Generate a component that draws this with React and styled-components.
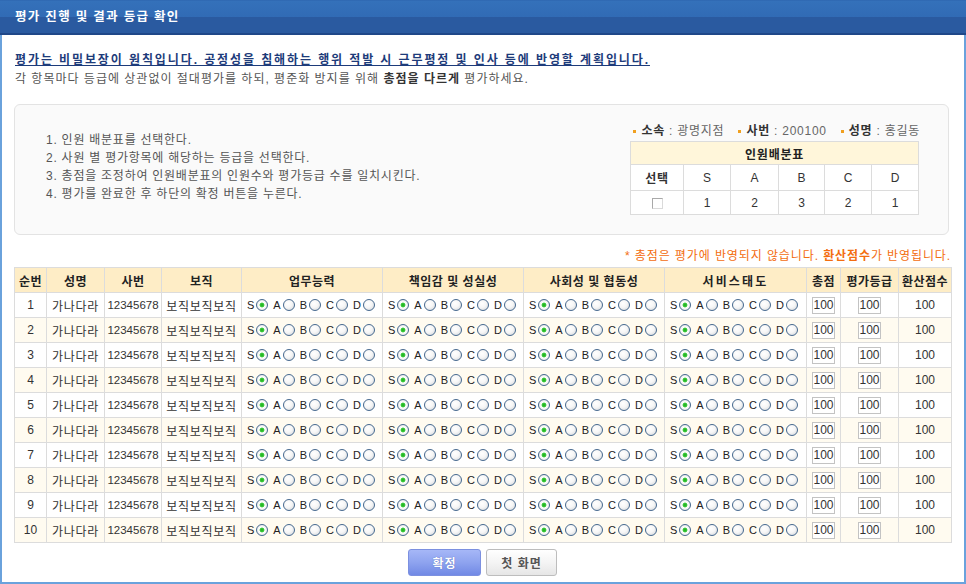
import React from "react";
import styled, { createGlobalStyle, css } from "styled-components";

const FONT = `"Liberation Sans", "Noto Sans CJK KR", sans-serif`;

const GlobalStyle = createGlobalStyle`
  html, body { margin: 0; padding: 0; background: #fff; }
  body { font-family: ${FONT}; font-size: 12px; color: #333; letter-spacing: 0.75px; }
  * { box-sizing: border-box; }
`;

const Frame = styled.div`
  width: 966px;
  height: 584px;
  display: flex;
  flex-direction: column;
  background: #fff;
`;

const TitleBar = styled.div`
  flex: none;
  height: 35px;
  padding-left: 15px;
  background: linear-gradient(
    to bottom,
    #2c63ad 0,
    #3471ba 1px,
    #316bb5 17px,
    #2a5aa0 17px,
    #2a5aa0 33px,
    #1f4788 33px
  );
  color: #fff;
  font-size: 12.5px;
  font-weight: bold;
  letter-spacing: 1.3px;
  line-height: 34px;
`;

const Body = styled.div`
  flex: 1;
  border: 2px solid #6aa2dc;
  border-top: none;
  padding: 16px 13px 0 12px;
  display: flex;
  flex-direction: column;
`;

const Lead = styled.p`
  margin: 0 0 0 1px;
  line-height: 18px;
  font-size: 12px;
  font-weight: bold;
  color: #1d3b7a;
  text-decoration: underline;
  letter-spacing: 1.9px;
`;

const Sub = styled.p`
  margin: 1px 0 0 1px;
  line-height: 18px;
  color: #555;
  letter-spacing: 1px;
  strong { color: #333; }
`;

const InfoBox = styled.div`
  margin: 16px 2px 0 0;
  height: 131px;
  border: 1px solid #e3e3e3;
  border-radius: 6px;
  background: #fafafa;
  display: flex;
  align-items: flex-start;
  justify-content: space-between;
  padding: 0 30px 0 31px;
`;

const Steps = styled.ol`
  margin: 26px 0 0;
  padding: 0;
  list-style: none;
  color: #555;
  line-height: 18px;
`;

const Side = styled.div`
  margin-top: 19px;
  width: 288px;
`;

const Staff = styled.div`
  display: flex;
  justify-content: flex-end;
  gap: 14px;
  line-height: 14px;
  margin: 0 -2px 3px 0;
  color: #666;
  white-space: nowrap;
`;

const StaffItem = styled.span`
  display: inline-flex;
  align-items: center;
  white-space: pre;
  b { color: #333; }
`;

const Bullet = styled.i`
  display: inline-block;
  width: 3px;
  height: 3px;
  background: #f0a020;
  margin-right: 5px;
`;

const DistTable = styled.table`
  width: 288px;
  border-collapse: collapse;
  table-layout: fixed;
  background: #fff;
  letter-spacing: 0;
`;

const DistHead = styled.th`
  height: 23px;
  padding: 0;
  border: 1px solid #dcdcdc;
  background: #fff6da;
  color: #222;
  font-weight: bold;
  letter-spacing: 0.75px;
`;

const DistCell = styled.td`
  height: ${(p) => p.$h}px;
  padding: 0;
  border: 1px solid #dcdcdc;
  text-align: center;
  color: #333;
  font-weight: ${(p) => (p.$bold ? "bold" : "normal")};
  letter-spacing: ${(p) => (p.$bold ? "0.75px" : "0")};
`;

const Check = styled.input.attrs({ type: "checkbox" })`
  appearance: none;
  -webkit-appearance: none;
  margin: 0;
  width: 11px;
  height: 11px;
  border: 1px solid #a9a9a9;
  border-right-color: #dadada;
  border-bottom-color: #dadada;
  background: #fff;
  vertical-align: middle;
`;

const Note = styled.p`
  margin: 13px 0 3px;
  text-align: right;
  color: #f36d10;
  line-height: 16px;
  letter-spacing: 0.9px;
  b { font-weight: bold; }
`;

const Grid = styled.table`
  width: 937px;
  border-collapse: collapse;
  table-layout: fixed;
`;

const Th = styled.th`
  height: 25px;
  padding: 0;
  background: #feedc6;
  border: 1px solid #dcdcdc;
  color: #222;
  font-weight: bold;
  white-space: nowrap;
  letter-spacing: ${(p) => (p.$wide ? "2.2px" : "0.5px")};
`;

const Tr = styled.tr`
  background: ${(p) => (p.$alt ? "#fffbf0" : "#fff")};
`;

const Td = styled.td`
  height: 25px;
  padding: 0;
  border: 1px solid #dcdcdc;
  text-align: center;
  color: #333;
  white-space: nowrap;
  overflow: hidden;
`;

const NumTd = styled(Td)`
  letter-spacing: 0;
  font-size: ${(p) => (p.$small ? "11.5px" : "12px")};
`;

const GradeTd = styled(Td)`
  text-align: left;
  padding-left: 5px;
`;

const Options = styled.div`
  display: flex;
  align-items: center;
`;

const Opt = styled.label`
  display: inline-flex;
  align-items: center;
  margin-right: 5px;
  font-size: 11px;
  letter-spacing: 0;
  color: #222;
  &:last-child { margin-right: 0; }
`;

const Radio = styled.input.attrs({ type: "radio" })`
  appearance: none;
  -webkit-appearance: none;
  margin: 0 0 0 2px;
  width: 12px;
  height: 12px;
  border-radius: 50%;
  border: 1px solid #46698f;
  background: radial-gradient(circle at 40% 35%, #ffffff 0, #f6f6f6 45%, #cdd1d6 100%);
  &:checked {
    background: radial-gradient(circle at 50% 50%, #1faa1f 0, #3acb3a 2px, #ffffff 2.8px, #f3f3f3 60%, #cdd1d6 100%);
  }
`;

const ScoreInput = styled.input`
  width: 23px;
  height: 17px;
  border: 1px solid #c3c3c3;
  padding: 0;
  font: 12px ${FONT};
  letter-spacing: 0;
  color: #333;
  text-align: center;
  vertical-align: middle;
  background: #fff;
`;

const Actions = styled.div`
  display: flex;
  justify-content: center;
  gap: 5px;
  margin-top: 6px;
`;

const Btn = styled.button`
  width: ${(p) => p.$w}px;
  height: 27px;
  border-radius: 3px;
  font: bold 12px ${FONT};
  letter-spacing: 1px;
  padding: 0;
  cursor: pointer;
  ${(p) =>
    p.$primary
      ? css`
          border: 1px solid #7c90e0;
          background: linear-gradient(to bottom, #a6b7f7 0%, #8ea3ef 50%, #7189e5 100%);
          color: #fff;
          text-shadow: 0 0 1px rgba(40, 60, 140, 0.6);
        `
      : css`
          border: 1px solid #bdbdbd;
          background: linear-gradient(to bottom, #ffffff 0%, #f4f4f4 50%, #e6e6e6 100%);
          color: #555;
        `}
`;

const COLS = [32, 58, 57, 80, 141, 141, 141, 142, 34, 58, 53];
const CATEGORIES = ["업무능력", "책임감 및 성실성", "사회성 및 협동성", "서비스태도"];
const GRADES = ["S", "A", "B", "C", "D"];
const DIST = [1, 2, 3, 2, 1];
const DIST_W = [53, 47, 48, 46, 47, 47];

const rows = Array.from({ length: 10 }, (_, i) => ({
  no: i + 1,
  name: "가나다라",
  id: "12345678",
  pos: "보직보직보직",
}));

function GradeOptions({ name }) {
  return (
    <Options>
      {GRADES.map((g, i) => (
        <Opt key={g}>
          {g}
          <Radio name={name} defaultChecked={i === 0} />
        </Opt>
      ))}
    </Options>
  );
}

export default function App() {
  return (
    <>
      <GlobalStyle />
      <Frame>
        <TitleBar>평가 진행 및 결과 등급 확인</TitleBar>
        <Body>
          <Lead>
            평가는 비밀보장이 원칙입니다. 공정성을 침해하는 행위 적발 시 근무평정 및 인사 등에 반영할 계획입니다.
          </Lead>
          <Sub>
            각 항목마다 등급에 상관없이 절대평가를 하되, 평준화 방지를 위해 <strong>총점을 다르게</strong> 평가하세요.
          </Sub>

          <InfoBox>
            <Steps>
              <li>1. 인원 배분표를 선택한다.</li>
              <li>2. 사원 별 평가항목에 해당하는 등급을 선택한다.</li>
              <li>3. 총점을 조정하여 인원배분표의 인원수와 평가등급 수를 일치시킨다.</li>
              <li>4. 평가를 완료한 후 하단의 확정 버튼을 누른다.</li>
            </Steps>
            <Side>
              <Staff>
                <StaffItem>
                  <Bullet />
                  <b>소속</b> : 광명지점
                </StaffItem>
                <StaffItem>
                  <Bullet />
                  <b>사번</b> : 200100
                </StaffItem>
                <StaffItem>
                  <Bullet />
                  <b>성명</b> : 홍길동
                </StaffItem>
              </Staff>
              <DistTable>
                <colgroup>
                  {DIST_W.map((w, i) => (
                    <col key={i} style={{ width: w }} />
                  ))}
                </colgroup>
                <tbody>
                  <tr>
                    <DistHead colSpan={6}>인원배분표</DistHead>
                  </tr>
                  <tr>
                    <DistCell $h={26} $bold>
                      선택
                    </DistCell>
                    {GRADES.map((g) => (
                      <DistCell key={g} $h={26}>
                        {g}
                      </DistCell>
                    ))}
                  </tr>
                  <tr>
                    <DistCell $h={24}>
                      <Check />
                    </DistCell>
                    {DIST.map((n, i) => (
                      <DistCell key={i} $h={24}>
                        {n}
                      </DistCell>
                    ))}
                  </tr>
                </tbody>
              </DistTable>
            </Side>
          </InfoBox>

          <Note>
            * 총점은 평가에 반영되지 않습니다. <b>환산점수</b>가 반영됩니다.
          </Note>

          <Grid>
            <colgroup>
              {COLS.map((w, i) => (
                <col key={i} style={{ width: w }} />
              ))}
            </colgroup>
            <thead>
              <tr>
                <Th>순번</Th>
                <Th>성명</Th>
                <Th>사번</Th>
                <Th>보직</Th>
                {CATEGORIES.map((c) => (
                  <Th key={c} $wide={c === "서비스태도"}>
                    {c}
                  </Th>
                ))}
                <Th>총점</Th>
                <Th>평가등급</Th>
                <Th>환산점수</Th>
              </tr>
            </thead>
            <tbody>
              {rows.map((r, idx) => (
                <Tr key={r.no} $alt={idx % 2 === 1}>
                  <NumTd>{r.no}</NumTd>
                  <Td>{r.name}</Td>
                  <NumTd $small>{r.id}</NumTd>
                  <Td>{r.pos}</Td>
                  {CATEGORIES.map((c, ci) => (
                    <GradeTd key={c}>
                      <GradeOptions name={`r${r.no}c${ci}`} />
                    </GradeTd>
                  ))}
                  <Td>
                    <ScoreInput defaultValue="100" />
                  </Td>
                  <Td>
                    <ScoreInput defaultValue="100" />
                  </Td>
                  <NumTd>100</NumTd>
                </Tr>
              ))}
            </tbody>
          </Grid>

          <Actions>
            <Btn $primary $w={73}>
              확정
            </Btn>
            <Btn $w={71}>첫 화면</Btn>
          </Actions>
        </Body>
      </Frame>
    </>
  );
}
